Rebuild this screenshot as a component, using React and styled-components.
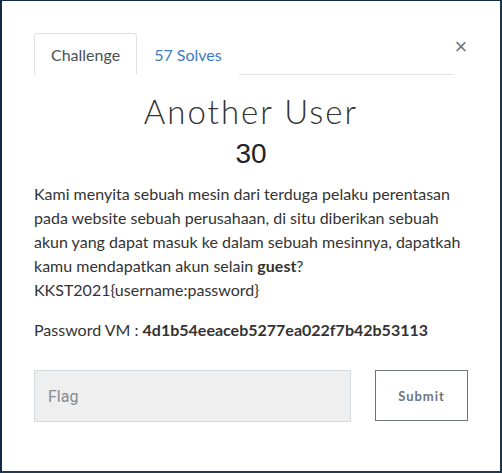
import React, { useState } from 'react';
import styled, { createGlobalStyle } from 'styled-components';

const GlobalStyle = createGlobalStyle`
html, body {
  margin: 0;
  padding: 0;
  background: #fff;
}
* { box-sizing: border-box; }
`

const Frame = styled.div`
width: 502px;
height: 473px;
border-style: solid;
border-color: #0e2c48;
border-width: 1px 2px 2px 2px;
border-bottom-color: #263a4d;
border-right-color: #1d3449;
background: #fff;
font-family: Lato, "Noto Sans", sans-serif;
color: #333;
`

const Body = styled.div`
padding: 32px 32px 0 32px;
`

const Header = styled.div`
display: flex;
align-items: flex-start;
`

const TabBar = styled.div`
flex: 1;
display: flex;
border-bottom: 1px solid #dee2e6;
height: 42px;
`

const Tab = styled.div`
padding: 0 16px;
height: 42px;
display: flex;
align-items: center;
font-size: 16px;
margin-bottom: -1px;
border: 1px solid ${p => (p.active ? '#dee2e6' : 'transparent')};
border-bottom-color: ${p => (p.active ? '#fff' : 'transparent')};
border-radius: 4px 4px 0 0;
background: #fff;
color: ${p => (p.active ? '#495057' : '#3a7cc2')};
cursor: pointer;
`

const Close = styled.button`
width: 14px;
margin-top: 3px;
border: none;
background: none;
font-family: "Liberation Sans", Arial, sans-serif;
font-size: 22px;
line-height: 1;
color: #777;
padding: 0;
cursor: pointer;
`

const Title = styled.h3`
margin: 16px 0 6px;
text-align: center;
font-family: Lato, sans-serif;
font-weight: 300;
font-size: 33px;
letter-spacing: 2px;
line-height: 40px;
color: #333;
`

const Value = styled.h4`
margin: 0;
text-align: center;
font-family: "Liberation Sans", Arial, sans-serif;
font-weight: 400;
font-size: 28px;
line-height: 34px;
color: #222;
`

const Description = styled.p`
margin: 11px 0 0;
font-size: 16px;
line-height: 24px;
color: #333;
`

const Meta = styled.p`
margin: 16px 0 0;
font-size: 16px;
line-height: 24px;
color: #333;
b { font-weight: 700; }
`

const FlagRow = styled.form`
display: flex;
gap: 24px;
margin-top: 28px;
`

const FlagInput = styled.input`
width: 317px;
height: 52px;
border: 1px solid #d6dbe0;
background: #efefef;
padding: 0 13px;
font-family: Roboto, "Liberation Sans", sans-serif;
font-size: 16px;
color: #333;
outline: none;
&::placeholder { color: #878b8f; }
`

const SubmitButton = styled.button`
width: 93px;
height: 51px;
border: 1px solid #6c757d;
background: #fff;
font-family: Lato, sans-serif;
font-weight: 700;
font-size: 13px;
letter-spacing: 1px;
color: #6c757d;
cursor: pointer;
`

const App = () => {
    const [tab, setTab] = useState(0);
    const [flag, setFlag] = useState('');
    return (<>
        <GlobalStyle />
        <Frame>
            <Body>
                <Header>
                    <TabBar>
                        <Tab active={tab === 0} onClick={() => setTab(0)}>Challenge</Tab>
                        <Tab active={tab === 1} onClick={() => setTab(1)}>57 Solves</Tab>
                    </TabBar>
                    <Close>&times;</Close>
                </Header>
                <Title>Another User</Title>
                <Value>30</Value>
                <Description>
                    Kami menyita sebuah mesin dari terduga pelaku perentasan<br />
                    pada website sebuah perusahaan, di situ diberikan sebuah<br />
                    akun yang dapat masuk ke dalam sebuah mesinnya, dapatkah<br />
                    kamu mendapatkan akun selain <b>guest</b>?<br />
                    KKST2021&#123;username:password&#125;
                </Description>
                <Meta>Password VM : <b>4d1b54eeaceb5277ea022f7b42b53113</b></Meta>
                <FlagRow onSubmit={e => e.preventDefault()}>
                    <FlagInput placeholder="Flag" value={flag} onChange={e => setFlag(e.target.value)} />
                    <SubmitButton type="submit">Submit</SubmitButton>
                </FlagRow>
            </Body>
        </Frame>
    </>
    )
}

export default App;
